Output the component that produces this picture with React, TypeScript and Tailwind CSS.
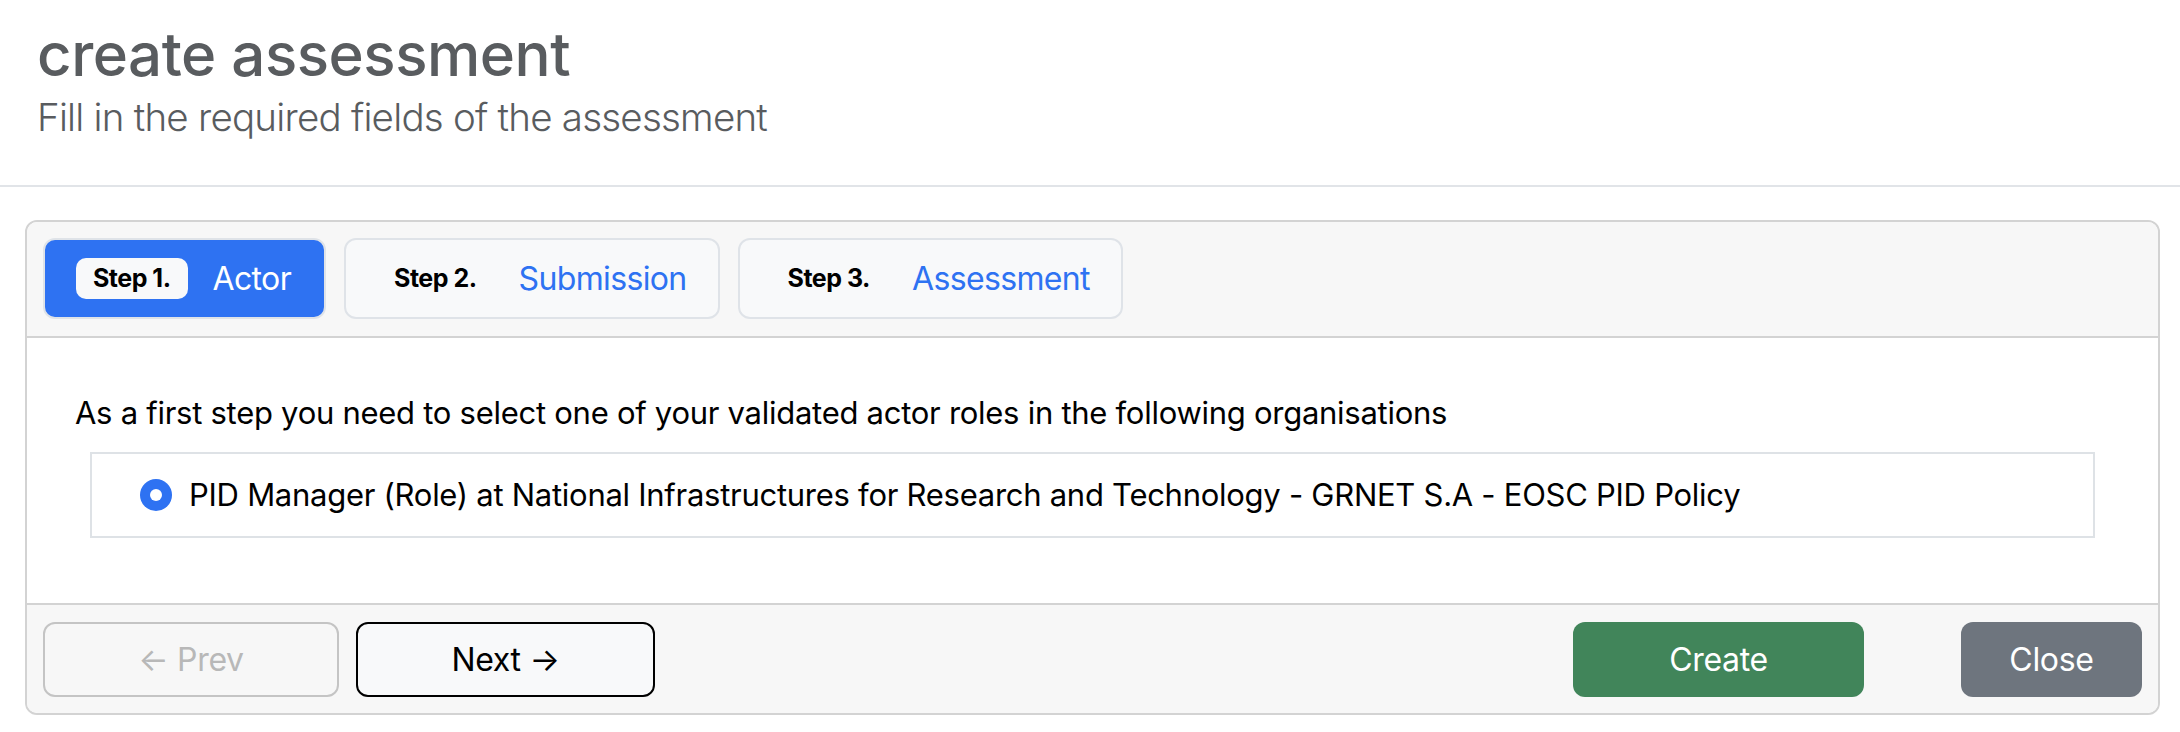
import { useState } from "react";

const steps = [
  { n: 1, label: "Actor" },
  { n: 2, label: "Submission" },
  { n: 3, label: "Assessment" },
];

function StepTab({ n, label, active }: { n: number; label: string; active: boolean }) {
  return (
    <button
      className={
        active
          ? "h-[81px] pl-[31px] pr-[33px] flex items-center rounded-[12px] border-2 border-[#dfe3e8] bg-[#2e72f2]"
          : "h-[81px] px-[31px] flex items-center rounded-[12px] border-2 border-[#dfe3e8] bg-[#f8f9fa]"
      }
    >
      <span
        className={
          active
            ? "h-[41px] px-[17px] flex items-center rounded-[10px] bg-[#f8f9fa] text-[25px] font-bold tracking-[-0.02em] text-black"
            : "h-[41px] px-[17px] flex items-center rounded-[10px] text-[25px] font-bold tracking-[-0.02em] text-black"
        }
      >
        Step {n}.
      </span>
      <span
        className={
          active
            ? "ml-[25px] text-[32px] tracking-[-0.02em] text-white"
            : "ml-[25px] text-[32px] tracking-[-0.02em] text-[#2e72f2]"
        }
      >
        {label}
      </span>
    </button>
  );
}

export default function App() {
  const [step] = useState(1);

  return (
    <div className="w-[2180px] h-[732px] bg-white font-['Inter',sans-serif]">
      <div className="h-[187px] pl-[37px] pt-[18px] border-b-2 border-[#e1e4e8]">
        <h2 className="text-[60px] leading-[72px] font-medium tracking-[-0.008em] text-[#595c5f]">
          create assessment
        </h2>
        <p className="mt-[3px] text-[38.5px] leading-[48px] font-light tracking-[-0.02em] text-[#595c5f]">
          Fill in the required fields of the assessment
        </p>
      </div>

      <div className="mt-[33px] ml-[25px] mr-[20px] border-2 border-[#d3d3d3] rounded-[12px] overflow-hidden">
        <div className="bg-[#f7f7f7] pt-[16px] pb-[17px] px-[16px] border-b-2 border-[#d3d3d3] flex gap-[18px]">
          {steps.map((s) => (
            <StepTab key={s.n} n={s.n} label={s.label} active={s.n === step} />
          ))}
        </div>

        <div className="bg-white px-[48px] pt-[51px] pb-[65px] tracking-[-0.017em]">
          <p className="text-[31px] leading-[48px] text-black">
            As a first step you need to select one of your validated actor roles in the following organisations
          </p>
          <div className="mt-[15px] mx-[15px] border-2 border-[#dee2e6] py-[17px] pl-[48px] flex items-center">
            <span className="w-[32px] h-[32px] rounded-full bg-[#2e72f2] flex items-center justify-center">
              <span className="w-[12px] h-[12px] rounded-full bg-white" />
            </span>
            <span className="ml-[17px] text-[31px] leading-[48px] text-black">
              PID Manager (Role) at National Infrastructures for Research and Technology - GRNET S.A - EOSC PID Policy
            </span>
          </div>
        </div>

        <div className="bg-[#f7f7f7] border-t-2 border-[#d3d3d3] pt-[17px] pb-[16px] px-[16px] flex items-center justify-between tracking-[-0.02em]">
          <div className="flex gap-[17px]">
            <button
              disabled
              className="w-[296px] h-[75px] rounded-[12px] border-2 border-[#c4c4c4] text-[32px] text-[#b8b8b8]"
            >
              ← Prev
            </button>
            <button className="w-[299px] h-[75px] rounded-[12px] border-2 border-black bg-[#f8f9fa] text-[32px] text-black">
              Next →
            </button>
          </div>
          <div className="flex gap-[97px]">
            <button className="w-[291px] h-[75px] rounded-[12px] bg-[#41855a] text-[32px] text-white">Create</button>
            <button className="w-[181px] h-[75px] rounded-[12px] bg-[#6e757e] text-[32px] text-white">Close</button>
          </div>
        </div>
      </div>
    </div>
  );
}
